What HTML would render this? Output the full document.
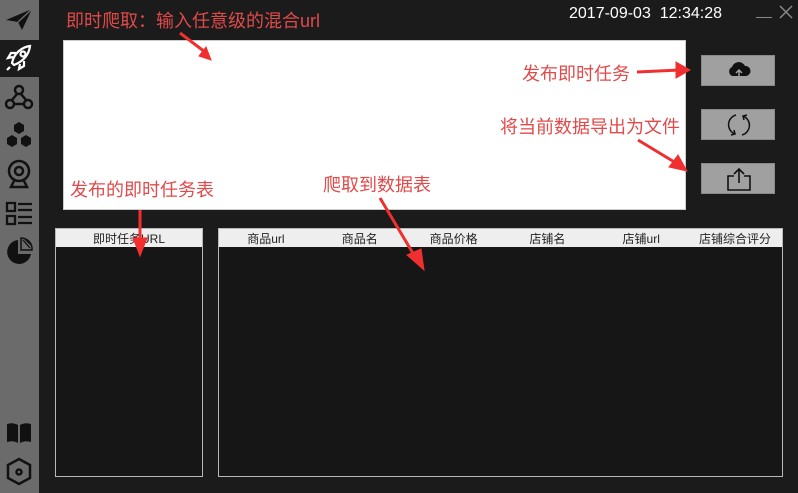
<!DOCTYPE html>
<html><head><meta charset="utf-8"><style>
*{margin:0;padding:0;box-sizing:border-box}
body{width:798px;height:493px;background:#1b1b1b;position:relative;overflow:hidden;font-family:"Liberation Sans","Noto Sans CJK SC",sans-serif}
.sb{position:absolute;left:0;top:0;width:39px;height:493px;background:#6b6b6b}
.act{position:absolute;left:0;top:40px;width:39px;height:37px;background:#1b1b1b}
.ic{position:absolute;left:4px}
.red{position:absolute;color:#e04a4a;font-size:18px;white-space:nowrap;line-height:20px}
.btn{position:absolute;left:701px;width:74px;height:31px;background:#a0a0a0;border:1px solid #8a8a8a}
.tbl{position:absolute;top:228px;background:#161616;border:1px solid #b8b8b8}
.hd{height:18px;background:#eeeeee;font-size:12px;color:#222;display:flex;align-items:center}
.hd span{flex:1;text-align:center}
</style></head><body>
<div class="sb"></div><div class="act"></div>
<svg class="ic" style="top:6px" width="30" height="26" viewBox="0 0 30 26"><path d="M2 14 L28 3 L18 24 L14 16 Z" fill="#111"/><path d="M14 16 L28 3" stroke="#6b6b6b" stroke-width="1.5"/></svg>
<svg class="ic" style="top:43px" width="30" height="30" viewBox="0 0 30 30" fill="none" stroke="#fff" stroke-width="2.2"><path d="M8 20 C10 10 18 4 26 3 C25 11 20 18 10 22 Z"/><circle cx="19" cy="11" r="2.5"/><path d="M9 14 L4 15 L7 10 L12 10 M16 21 L15 26 L20 23 L20 18"/><path d="M6 24 L3 27"/></svg>
<svg class="ic" style="top:83px" width="30" height="28" viewBox="0 0 30 28" fill="none" stroke="#111" stroke-width="2.5"><circle cx="15" cy="7" r="4"/><circle cx="6" cy="21" r="4"/><circle cx="24" cy="21" r="4"/><path d="M13 11 L8 17 M10 21 H20 M17 11 L22 17"/></svg>
<svg class="ic" style="top:121px" width="30" height="28" viewBox="0 0 30 28" fill="#111"><polygon points="15,1 20,4 20,10 15,13 10,10 10,4"/><polygon points="8,14 13,17 13,23 8,26 3,23 3,17"/><polygon points="22,14 27,17 27,23 22,26 17,23 17,17"/></svg>
<svg class="ic" style="top:158px" width="30" height="32" viewBox="0 0 30 32" fill="none" stroke="#111" stroke-width="2.5"><circle cx="15" cy="13" r="10"/><circle cx="15" cy="13" r="4"/><path d="M10 23 L7 29 H23 L20 23"/></svg>
<svg class="ic" style="top:200px" width="30" height="28" viewBox="0 0 30 28" fill="none" stroke="#111" stroke-width="2.3"><rect x="3" y="3" width="8" height="8"/><rect x="3" y="16" width="8" height="8"/><path d="M14 4 H28 M14 10 H28 M14 17 H28 M14 23 H28"/></svg>
<svg class="ic" style="top:237px" width="30" height="30" viewBox="0 0 30 30"><path d="M14 3 A12 12 0 1 0 27 17 L14 17 Z" fill="#111"/><path d="M17 1 A11 11 0 0 1 28 13 L17 13 Z" fill="none" stroke="#111" stroke-width="1.5"/><path d="M19 3 L26 11 M21 2 L27 8" stroke="#111" stroke-width="1.3"/></svg>
<svg class="ic" style="top:420px" width="30" height="26" viewBox="0 0 30 26" fill="#111"><path d="M3 4 Q9 2 14 5 V23 Q9 20 3 22 Z M16 5 Q21 2 27 4 V22 Q21 20 16 23 Z"/></svg>
<svg class="ic" style="top:456px" width="30" height="32" viewBox="0 0 30 32" fill="none" stroke="#111" stroke-width="2.5"><polygon points="15,3 26,9 26,22 15,28 4,22 4,9"/><circle cx="15" cy="16" r="2.5"/></svg>

<div style="position:absolute;left:569px;top:5px;color:#fff;font-size:16px">2017-09-03&nbsp;&nbsp;12:34:28</div>
<div style="position:absolute;left:756px;top:17px;width:16px;height:1px;background:#888"></div>
<svg style="position:absolute;left:778px;top:4px" width="16" height="16"><path d="M2 2 L14 14 M14 2 L2 14" stroke="#888" stroke-width="1.5"/></svg>

<div style="position:absolute;left:63px;top:40px;width:623px;height:170px;background:#fff;border:1px solid #ccc"></div>

<div class="btn" style="top:55px"><svg style="position:absolute;left:24px;top:3px" width="26" height="22" viewBox="0 0 26 22"><path d="M6 17 A5 5 0 0 1 6 8 A7 7 0 0 1 19 7 A5 5 0 0 1 20 17 Z" fill="#111"/><path d="M13 20 V11 M10 14 L13 11 L16 14" stroke="#a0a0a0" stroke-width="1.5" fill="none"/></svg></div>
<div class="btn" style="top:109px"><svg style="position:absolute;left:24px;top:2px" width="26" height="26" viewBox="0 0 26 26" fill="none" stroke="#111" stroke-width="1.5"><path d="M10 3 A10 10 0 0 0 9 22 M8 18 L9 22 L5 23"/><path d="M16 23 A10 10 0 0 0 17 4 M18 8 L17 4 L21 3"/></svg></div>
<div class="btn" style="top:163px"><svg style="position:absolute;left:23px;top:2px" width="28" height="26" viewBox="0 0 28 26" fill="none" stroke="#111" stroke-width="1.6"><path d="M9 10 H3 V24 H25 V10 H19 M14 17 V3 M9 8 L14 3 L19 8"/></svg></div>

<div class="tbl" style="left:55px;width:148px;height:249px"><div class="hd"><span>即时任务URL</span></div></div>
<div class="tbl" style="left:218px;width:565px;height:249px"><div class="hd"><span>商品url</span><span>商品名</span><span>商品价格</span><span>店铺名</span><span>店铺url</span><span>店铺综合评分</span></div></div>

<div class="red" style="left:66px;top:11px">即时爬取：输入任意级的混合url</div>
<div class="red" style="left:522px;top:64px">发布即时任务</div>
<div class="red" style="left:500px;top:117px">将当前数据导出为文件</div>
<div class="red" style="left:70px;top:180px">发布的即时任务表</div>
<div class="red" style="left:323px;top:175px">爬取到数据表</div>

<svg style="position:absolute;left:0;top:0" width="798" height="493">
<g fill="#f03030" stroke="#f03030">
<path d="M180 33 L205 52" stroke-width="3"/><polygon points="199,56 211,60 206,47" />
<path d="M637 72 L680 70" stroke-width="3"/><polygon points="676,62 690,70 676,78"/>
<path d="M638 140 L676 163" stroke-width="3"/><polygon points="669,167 687,171 678,155"/>
<path d="M140 210 L140 242" stroke-width="3"/><polygon points="133,238 140,256 147,238"/>
<path d="M380 198 L414 255" stroke-width="3"/><polygon points="407,255 424,270 421,249"/>
</g></svg>
</body></html>
